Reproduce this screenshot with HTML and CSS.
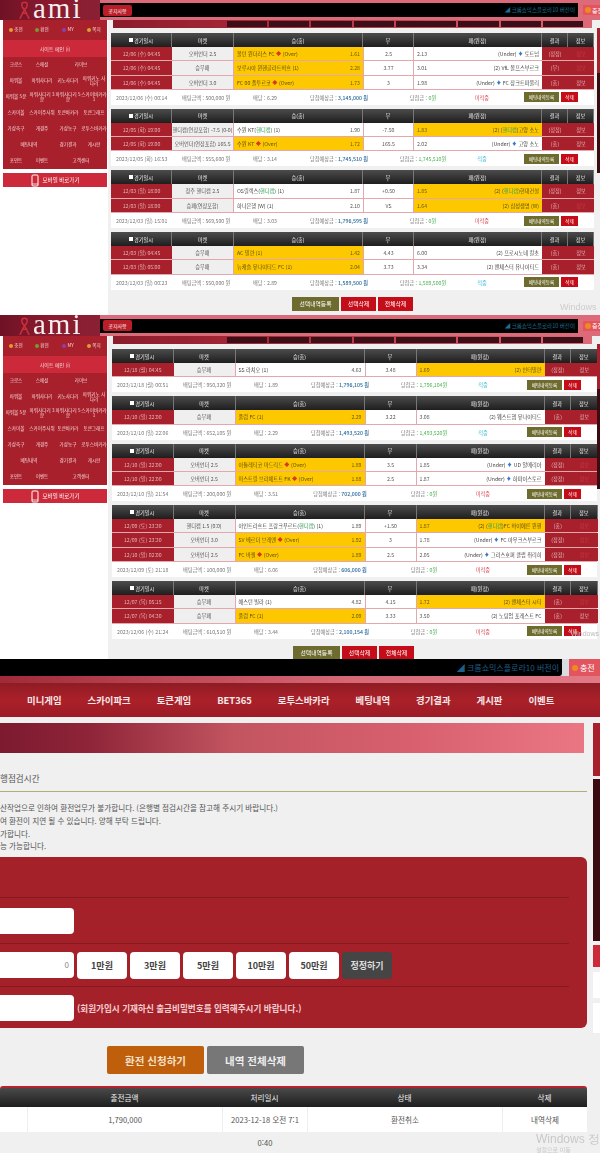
FILE: index.html
```html
<!DOCTYPE html>
<html lang="ko">
<head>
  <meta charset="UTF-8" />
  <meta name="viewport" content="width=device-width, initial-scale=1.0"/>
  <title>ami</title>
  <link rel="stylesheet" href="styles.css">
</head>
<body>

  <!-- First capture -->
  <section class="shot shot-a">
    <header class="top">
      <div class="logo">
        <svg class="ribbon" viewBox="0 0 14 20"><path d="M7 1C3 1 3 6 7 9L2 19M7 1c4 0 4 5 0 8l5 10M4 13h6" fill="none" stroke="#c8303c" stroke-width="1.6"/></svg>
        <span class="logo-text">ami</span>
      </div>
      <div class="ticker">
        <button class="notice">공지사항</button>
        <span class="ticker-text">◢ 크롬쇼믹스플로라10 버전이</span>
      </div>
      <div class="charge"><i class="coin"></i>충전</div>
    </header>
    <div class="body">
      <aside class="side">
        <nav class="menu">
          <a><i class="dot d1"></i>충전</a><a><i class="dot d2"></i>환전</a><a><i class="dot d3"></i>MY</a><a><i class="dot d4"></i>쪽지</a>
          <a class="main-link span4">사이트 메인 (i)</a>
          <a>크로스</a><a>스페셜</a><a class="span2">라이브</a>
          <a>파워볼</a><a>파워사다리</a><a>키노사다리</a><a>파워키노 사다리</a>
          <a>파워볼 5분</a><a>파워사다리 3분</a><a>파워사다리 5분</a><a>스카이바카라 1</a>
          <a>스카이볼</a><a>스카이주사위</a><a>토큰바카라</a><a>토큰그래프</a>
          <a>가상축구</a><a>개경주</a><a>가상농구</a><a>로투스바카라</a>
          <a class="span2">베팅내역</a><a>경기결과</a><a>게시판</a>
          <a>포인트</a><a>이벤트</a><a class="span2">고객센터</a>
        </nav>
        <a class="mobile"><svg class="phone" viewBox="0 0 8 13"><rect x="1" y="1" width="6" height="11" rx="1" fill="none" stroke="#fff" stroke-width="1"/><path d="M1 10h6" stroke="#fff" stroke-width=".8"/></svg>모바일 바로가기</a>
      </aside>
      <main class="main">
        <div class="strip"><i></i><i></i><i></i><i></i><i class="wide"></i><i></i><i></i><i></i></div>

        <div class="ticket">
          <div class="head"><span><i class="check"></i>경기일시</span><span>마켓</span><span>승(홈)</span><span>무</span><span>패(원정)</span><span>결과</span><span>정보</span></div>
          <div class="row"><span class="date">12/06 (수) 04:45</span><span class="mkt">오버언더 2.5</span><span class="pick sel"><b>볼턴 원더러스 FC <i class="up">◆</i> (Over)</b><em>1.61</em></span><span class="mid">2.5</span><span class="pick"><em>2.13</em><b>(Under) <i class="dn">♦</i> 토트넘</b></span><span class="res">(정정)</span><span class="res off">정보</span></div>
          <div class="row"><span class="date">12/06 (수) 04:45</span><span class="mkt">승무패</span><span class="pick sel"><b>보루시아 뮌헨글라트바흐 (1)</b><em>2.28</em></span><span class="mid">3.77</span><span class="pick"><em>3.01</em><b>(2) VfL 볼프스부르크</b></span><span class="res">(무)</span><span class="res off">정보</span></div>
          <div class="row"><span class="date">12/06 (수) 04:45</span><span class="mkt">오버언더 3.0</span><span class="pick sel"><b>FC 00 폴투르코 <i class="up">◆</i> (Over)</b><em>1.73</em></span><span class="mid">3</span><span class="pick"><em>1.98</em><b>(Under) <i class="dn">♦</i> FC 장크트파울리</b></span><span class="res">(홈)</span><span class="res">정보</span></div>
          <div class="foot"><span>2023/12/06 (수) 00:14</span><span>배팅금액 : 500,000 원</span><span>배당 : 6.29</span><span class="exp">당첨예상금 : <b>3,145,000 원</b></span><span class="win">당첨금 : <b>0원</b></span><span class="miss">미적중</span><span class="acts"><button class="olive">베팅내역등록</button><button class="red">삭제</button></span></div>
        </div>

        <div class="ticket">
          <div class="head"><span><i class="check"></i>경기일시</span><span>마켓</span><span>승(홈)</span><span>무</span><span>패(원정)</span><span>결과</span><span>정보</span></div>
          <div class="row"><span class="date">12/05 (화) 19:00</span><span class="mkt">핸디캡(연장포함) -7.5 (0-0)</span><span class="pick"><b>수원 KT(<u>핸디캡</u>) (1)</b><em>1.90</em></span><span class="mid">-7.50</span><span class="pick sel"><em>1.83</em><b>(2) (<u>핸디캡</u>)고양 소노</b></span><span class="res">(정정)</span><span class="res">정보</span></div>
          <div class="row"><span class="date">12/05 (화) 19:00</span><span class="mkt">오버언더(연장포함) 165.5</span><span class="pick sel"><b>수원 KT <i class="up">◆</i> (Over)</b><em>1.72</em></span><span class="mid">165.5</span><span class="pick"><em>2.02</em><b>(Under) <i class="dn">♦</i> 고양 소노</b></span><span class="res">(홈)</span><span class="res">정보</span></div>
          <div class="foot"><span>2023/12/05 (화) 16:53</span><span>배팅금액 : 555,600 원</span><span>배당 : 3.14</span><span class="exp">당첨예상금 : <b>1,745,510 원</b></span><span class="win">당첨금 : <b>1,745,510원</b></span><span class="hit">적중</span><span class="acts"><button class="olive">베팅내역등록</button><button class="red">삭제</button></span></div>
        </div>

        <div class="ticket">
          <div class="head"><span><i class="check"></i>경기일시</span><span>마켓</span><span>승(홈)</span><span>무</span><span>패(원정)</span><span>결과</span><span>정보</span></div>
          <div class="row"><span class="date">12/03 (일) 18:00</span><span class="mkt">청주 핸디캡 2.5</span><span class="pick"><b>OS릴렉스(<u>핸디캡</u>) (1)</b><em>1.87</em></span><span class="mid">+0.50</span><span class="pick sel"><em>1.85</em><b>(2) (<u>핸디캡</u>)현대건설</b></span><span class="res">(정정)</span><span class="res">정보</span></div>
          <div class="row"><span class="date">12/03 (일) 18:00</span><span class="mkt">승패(연장포함)</span><span class="pick"><b>하나은행 (W) (1)</b><em>2.10</em></span><span class="mid">VS</span><span class="pick sel"><em>1.64</em><b>(2) 삼성생명 (W)</b></span><span class="res">(홈)</span><span class="res off">정보</span></div>
          <div class="foot"><span>2023/12/03 (일) 15:01</span><span>배팅금액 : 569,500 원</span><span>배당 : 3.03</span><span class="exp">당첨예상금 : <b>1,796,595 원</b></span><span class="win">당첨금 : <b>0원</b></span><span class="miss">미적중</span><span class="acts"><button class="olive">베팅내역등록</button><button class="red">삭제</button></span></div>
        </div>

        <div class="ticket">
          <div class="head"><span><i class="check"></i>경기일시</span><span>마켓</span><span>승(홈)</span><span>무</span><span>패(원정)</span><span>결과</span><span>정보</span></div>
          <div class="row"><span class="date">12/03 (일) 04:45</span><span class="mkt">승무패</span><span class="pick sel"><b>AC 밀란 (1)</b><em>1.42</em></span><span class="mid">4.43</span><span class="pick"><em>6.00</em><b>(2) 프로시노네 칼초</b></span><span class="res">(홈)</span><span class="res">정보</span></div>
          <div class="row"><span class="date">12/03 (일) 05:00</span><span class="mkt">승무패</span><span class="pick sel"><b>뉴캐슬 유나이티드 FC (1)</b><em>2.04</em></span><span class="mid">3.73</span><span class="pick"><em>3.34</em><b>(2) 맨체스터 유나이티드</b></span><span class="res">(홈)</span><span class="res">정보</span></div>
          <div class="foot"><span>2023/12/03 (일) 00:23</span><span>배팅금액 : 550,000 원</span><span>배당 : 2.89</span><span class="exp">당첨예상금 : <b>1,589,500 원</b></span><span class="win">당첨금 : <b>1,589,500원</b></span><span class="hit">적중</span><span class="acts"><button class="olive">베팅내역등록</button><button class="red">삭제</button></span></div>
        </div>

        <div class="bulk"><button class="olive">선택내역등록</button><button class="red">선택삭제</button><button class="red">전체삭제</button></div>
      </main>
      <div class="rail"><i class="rail-red"></i><i class="rail-dark"></i></div>
    </div>
    <div class="watermark">Windows 정</div>
  </section>

  <!-- Second capture -->
  <section class="shot shot-b">
    <header class="top">
      <div class="logo">
        <svg class="ribbon" viewBox="0 0 14 20"><path d="M7 1C3 1 3 6 7 9L2 19M7 1c4 0 4 5 0 8l5 10M4 13h6" fill="none" stroke="#c8303c" stroke-width="1.6"/></svg>
        <span class="logo-text">ami</span>
      </div>
      <div class="ticker">
        <button class="notice">공지사항</button>
        <span class="ticker-text">◢ 크롬쇼믹스플로라10 버전이</span>
      </div>
      <div class="charge"><i class="coin"></i>충전</div>
    </header>
    <div class="body">
      <aside class="side">
        <nav class="menu">
          <a><i class="dot d1"></i>충전</a><a><i class="dot d2"></i>환전</a><a><i class="dot d3"></i>MY</a><a><i class="dot d4"></i>쪽지</a>
          <a class="main-link span4">사이트 메인 (i)</a>
          <a>크로스</a><a>스페셜</a><a class="span2">라이브</a>
          <a>파워볼</a><a>파워사다리</a><a>키노사다리</a><a>파워키노 사다리</a>
          <a>파워볼 5분</a><a>파워사다리 3분</a><a>파워사다리 5분</a><a>스카이바카라 1</a>
          <a>스카이볼</a><a>스카이주사위</a><a>토큰바카라</a><a>토큰그래프</a>
          <a>가상축구</a><a>개경주</a><a>가상농구</a><a>로투스바카라</a>
          <a class="span2">베팅내역</a><a>경기결과</a><a>게시판</a>
          <a>포인트</a><a>이벤트</a><a class="span2">고객센터</a>
        </nav>
        <a class="mobile"><svg class="phone" viewBox="0 0 8 13"><rect x="1" y="1" width="6" height="11" rx="1" fill="none" stroke="#fff" stroke-width="1"/><path d="M1 10h6" stroke="#fff" stroke-width=".8"/></svg>모바일 바로가기</a>
      </aside>
      <main class="main">
        <div class="strip"><i></i><i></i><i></i><i></i><i class="wide"></i><i></i><i></i><i></i></div>

        <div class="ticket">
          <div class="head"><span><i class="check"></i>경기일시</span><span>마켓</span><span>승(홈)</span><span>무</span><span>패(원정)</span><span>결과</span><span>정보</span></div>
          <div class="row"><span class="date">12/18 (월) 04:45</span><span class="mkt">승무패</span><span class="pick"><b>SS 라치오 (1)</b><em>4.63</em></span><span class="mid">3.48</span><span class="pick sel"><em>1.69</em><b>(2) 인터밀란</b></span><span class="res">(정정)</span><span class="res">정보</span></div>
          <div class="foot"><span>2023/12/18 (월) 00:51</span><span>배팅금액 : 950,320 원</span><span>배당 : 1.89</span><span class="exp">당첨예상금 : <b>1,796,105 원</b></span><span class="win">당첨금 : <b>1,796,104원</b></span><span class="hit">적중</span><span class="acts"><button class="olive">베팅내역등록</button><button class="red">삭제</button></span></div>
        </div>

        <div class="ticket">
          <div class="head"><span><i class="check"></i>경기일시</span><span>마켓</span><span>승(홈)</span><span>무</span><span>패(원정)</span><span>결과</span><span>정보</span></div>
          <div class="row"><span class="date">12/10 (일) 22:00</span><span class="mkt">승무패</span><span class="pick sel"><b>풀럼 FC (1)</b><em>2.29</em></span><span class="mid">3.22</span><span class="pick"><em>3.08</em><b>(2) 웨스트햄 유나이티드</b></span><span class="res">(홈)</span><span class="res">정보</span></div>
          <div class="foot"><span>2023/12/10 (일) 22:06</span><span>배팅금액 : 652,105 원</span><span>배당 : 2.29</span><span class="exp">당첨예상금 : <b>1,493,520 원</b></span><span class="win">당첨금 : <b>1,493,520원</b></span><span class="hit">적중</span><span class="acts"><button class="olive">베팅내역등록</button><button class="red">삭제</button></span></div>
        </div>

        <div class="ticket">
          <div class="head"><span><i class="check"></i>경기일시</span><span>마켓</span><span>승(홈)</span><span>무</span><span>패(원정)</span><span>결과</span><span>정보</span></div>
          <div class="row"><span class="date">12/10 (일) 22:00</span><span class="mkt">오버언더 2.5</span><span class="pick sel"><b>아틀레티코 마드리드 <i class="up">◆</i> (Over)</b><em>1.89</em></span><span class="mid">3.5</span><span class="pick"><em>1.85</em><b>(Under) <i class="dn">♦</i> UD 알메리아</b></span><span class="res">(정정)</span><span class="res off">정보</span></div>
          <div class="row"><span class="date">12/10 (일) 22:00</span><span class="mkt">오버언더 2.5</span><span class="pick sel"><b>마스트릴 브라체트트 FK <i class="up">◆</i> (Over)</b><em>1.88</em></span><span class="mid">2.5</span><span class="pick"><em>1.87</em><b>(Under) <i class="dn">♦</i> 하파이스토르</b></span><span class="res">(정정)</span><span class="res off">정보</span></div>
          <div class="foot"><span>2023/12/10 (일) 21:54</span><span>배팅금액 : 200,000 원</span><span>배당 : 3.51</span><span class="exp">당첨예상금 : <b>702,000 원</b></span><span class="win">당첨금 : <b>0원</b></span><span class="miss">미적중</span><span class="acts"><button class="olive">베팅내역등록</button><button class="red">삭제</button></span></div>
        </div>

        <div class="ticket">
          <div class="head"><span><i class="check"></i>경기일시</span><span>마켓</span><span>승(홈)</span><span>무</span><span>패(원정)</span><span>결과</span><span>정보</span></div>
          <div class="row"><span class="date">12/09 (토) 23:30</span><span class="mkt">핸디캡 1.5 (0:0)</span><span class="pick"><b>아인트라흐트 프랑크푸르트(<u>핸디캡</u>) (1)</b><em>1.89</em></span><span class="mid">+1.50</span><span class="pick sel"><em>1.87</em><b>(2) (<u>핸디캡</u>)FC 바이에른 뮌헨</b></span><span class="res">(홈)</span><span class="res off">정보</span></div>
          <div class="row"><span class="date">12/09 (토) 23:30</span><span class="mkt">오버언더 3.0</span><span class="pick sel"><b>SV 베르더 브레멘 <i class="up">◆</i> (Over)</b><em>1.92</em></span><span class="mid">3</span><span class="pick"><em>1.78</em><b>(Under) <i class="dn">♦</i> FC 아우크스부르크</b></span><span class="res">(정정)</span><span class="res off">정보</span></div>
          <div class="row"><span class="date">12/10 (일) 02:00</span><span class="mkt">오버언더 2.5</span><span class="pick sel"><b>FC 바젤 <i class="up">◆</i> (Over)</b><em>1.89</em></span><span class="mid">2.5</span><span class="pick"><em>2.05</em><b>(Under) <i class="dn">♦</i> 그라스호퍼 클럽 취리히</b></span><span class="res">(정정)</span><span class="res off">정보</span></div>
          <div class="foot"><span>2023/12/09 (토) 21:18</span><span>배팅금액 : 100,000 원</span><span>배당 : 6.06</span><span class="exp">당첨예상금 : <b>606,000 원</b></span><span class="win">당첨금 : <b>0원</b></span><span class="miss">미적중</span><span class="acts"><button class="olive">베팅내역등록</button><button class="red">삭제</button></span></div>
        </div>

        <div class="ticket">
          <div class="head"><span><i class="check"></i>경기일시</span><span>마켓</span><span>승(홈)</span><span>무</span><span>패(원정)</span><span>결과</span><span>정보</span></div>
          <div class="row"><span class="date">12/07 (목) 05:15</span><span class="mkt">승무패</span><span class="pick"><b>애스턴 빌라 (1)</b><em>4.82</em></span><span class="mid">4.15</span><span class="pick sel"><em>1.72</em><b>(2) 맨체스터 시티</b></span><span class="res">(홈)</span><span class="res off">정보</span></div>
          <div class="row"><span class="date">12/07 (목) 04:30</span><span class="mkt">승무패</span><span class="pick sel"><b>풀럼 FC (1)</b><em>2.09</em></span><span class="mid">3.33</span><span class="pick"><em>3.50</em><b>(2) 노팅엄 포레스트 FC</b></span><span class="res">(홈)</span><span class="res">정보</span></div>
          <div class="foot"><span>2023/12/06 (수) 21:24</span><span>배팅금액 : 610,510 원</span><span>배당 : 3.44</span><span class="exp">당첨예상금 : <b>2,100,154 원</b></span><span class="win">당첨금 : <b>0원</b></span><span class="miss">미적중</span><span class="acts"><button class="olive">베팅내역등록</button><button class="red">삭제</button></span></div>
        </div>

        <div class="bulk"><button class="olive">선택내역등록</button><button class="red">선택삭제</button><button class="red">전체삭제</button></div>
      </main>
      <div class="rail"><i class="rail-red"></i><i class="rail-dark"></i></div>
    </div>
    <div class="watermark small">Windows 정</div>
  </section>

  <!-- Third capture: withdrawal form -->
  <section class="shot shot-c">
    <header class="wd-top">
      <div class="wd-black"><span class="wd-ticker">◢ 크롬쇼믹스플로라10 버전이</span></div>
      <div class="wd-charge"><i class="coin"></i>충전</div>
    </header>
    <div class="wd-band"></div>
    <nav class="wd-nav">
      <a>미니게임</a><a>스카이파크</a><a>토큰게임</a><a>BET365</a><a>로투스바카라</a><a>베팅내역</a><a>경기결과</a><a>게시판</a><a>이벤트</a>
    </nav>
    <div class="wd-body">
      <div class="wd-main">
        <div class="wd-banner"></div>
        <h3 class="wd-title">행점검시간</h3>
        <ul class="wd-notes">
          <li>산작업으로 인하여 환전업무가 불가합니다. (은행별 점검시간을 참고해 주시기 바랍니다.)</li>
          <li>여 환전이 지연 될 수 있습니다. 양해 부탁 드립니다.</li>
          <li>가합니다.</li>
          <li>능 가능합니다.</li>
        </ul>
        <form class="wd-form">
          <div class="wd-line wd-line-first"></div>
          <div class="wd-line"><div class="field"></div></div>
          <div class="wd-line">
            <div class="field amount">0</div>
            <button type="button" class="quick">1만원</button>
            <button type="button" class="quick">3만원</button>
            <button type="button" class="quick">5만원</button>
            <button type="button" class="quick">10만원</button>
            <button type="button" class="quick">50만원</button>
            <button type="button" class="quick reset">정정하기</button>
          </div>
          <div class="wd-line last"><div class="field"></div><span class="hint">(회원가입시 기재하신 출금비밀번호를 입력해주시기 바랍니다.)</span></div>
        </form>
        <div class="wd-actions">
          <button class="apply">환전 신청하기</button>
          <button class="clear">내역 전체삭제</button>
        </div>
        <div class="wd-table">
          <div class="wd-thead"><span></span><span>출전금액</span><span>처리일시</span><span>상태</span><span>삭제</span></div>
          <div class="wd-tr"><span></span><span>1,790,000</span><span>2023-12-18 오전 7:1</span><span>환전취소</span><span>내역삭제</span></div>
        </div>
        <div class="wd-time">0:40</div>
      </div>
      <div class="wd-rail">
        <i class="wr-red"></i><i class="wr-dark"></i><i class="wr-red2"></i><i class="wr-white"></i><i class="wr-white tall"></i>
      </div>
    </div>
    <div class="watermark big">Windows 정<small>설정으로 이동</small></div>
  </section>

</body>
</html>
```

FILE: styles.css
```css
:root {
  --red: #a8202c;
  --red-light: #cc2a3a;
  --pink: #dd6a78;
  --yellow: #fdc800;
  --olive: #6d6b2e;
  --btn-red: #c40d18;
  --bg: #f0f0f0;
  --line: #e2a8ae;
}

* {
  margin: 0;
  padding: 0;
  box-sizing: border-box;
  font-family: "Noto Sans CJK KR", "Noto Sans", sans-serif;
}

html, body {
  width: 600px;
  height: 1153px;
  overflow: hidden;
}

body {
  background: var(--bg);
  filter: blur(0.5px);
}

a { color: inherit; text-decoration: none; }
button { border: none; cursor: pointer; color: #fff; }
em, i { font-style: normal; }

.shot {
  position: relative;
  overflow: hidden;
  width: 600px;
}

.shot-a { height: 315px; --top-h: 20px; --cols: 61px 62px 129px 51px 128px 26px 26px; --inset: 3px; --wide: 483px; }
.shot-b { height: 344px; --top-h: 21px; --cols: 61.5px 62px 129px 52px 128px 26.5px 26.5px; --inset: 4px; --wide: 485px; }
.shot-c { height: 494px; }

/* top bar */
.top {
  display: flex;
  align-items: center;
  height: var(--top-h);
  background: var(--pink);
}

.logo {
  display: flex;
  align-items: flex-end;
  flex: 0 0 100px;
  height: 100%;
  padding-left: 18px;
  background: linear-gradient(90deg, #6f1226, #8b1a2e 50%, #8a2034);
  overflow: hidden;
}

.ribbon { width: 13px; height: 19px; }

.logo-text {
  margin-left: 2px;
  padding-bottom: 1.5px;
  font-family: "Liberation Serif", serif;
  font-size: 29px;
  line-height: 22px;
  letter-spacing: 2px;
  color: #f5eeee;
}

.ticker {
  display: flex;
  align-items: center;
  justify-content: space-between;
  width: 478px;
  height: 14px;
  padding: 0 3px;
  background: #000;
}

.notice {
  width: 29px;
  height: 11px;
  font-size: 5px;
  border-radius: 2px;
  background: #b81d28;
}

.ticker-text { font-size: 5.5px; color: #1c6f90; }

.charge {
  display: flex;
  align-items: center;
  gap: 1px;
  height: 10px;
  margin-left: 5px;
  padding-left: 2px;
  flex: 1;
  font-size: 6px;
  white-space: nowrap;
  overflow: hidden;
  color: #fff;
  background: #e2545e;
}

.coin {
  width: 6px;
  height: 6px;
  border-radius: 50%;
  background: #f08a20;
  flex: none;
}

/* layout */
.body { display: flex; }

.side {
  flex: 0 0 108px;
  height: 330px;
  padding-left: 3px;
  background: #fff;
}

.menu {
  display: grid;
  grid-template-columns: repeat(4, 26px);
  grid-template-rows: 20px 17px repeat(7, 16px);
  width: 104px;
  background: var(--red);
}

.menu a {
  display: flex;
  align-items: center;
  justify-content: center;
  text-align: center;
  font-size: 4.6px;
  line-height: 5.5px;
  color: #f4d4d6;
}

.menu .span2 { grid-column: span 2; }
.menu .span4 { grid-column: span 4; }
.menu .main-link { background: var(--red-light); font-size: 5px; }

.dot { width: 4px; height: 4px; margin-right: 1px; border-radius: 50%; }
.d1 { background: #e89a30; }
.d2 { background: #7a9a30; }
.d3 { background: #8a40b0; }
.d4 { background: #d8a030; }

.mobile {
  display: flex;
  align-items: center;
  justify-content: center;
  gap: 4px;
  width: 104px;
  height: 14px;
  margin-top: 4px;
  font-size: 5.5px;
  color: #fff;
  background: var(--red-light);
}

.phone { width: 8px; height: 13px; }

.main { flex: 0 0 489px; }

.strip {
  display: flex;
  gap: 2px;
  height: 8px;
  margin: 0 5px 5px 5px;
  padding: 0 9px 0 114px;
  background: linear-gradient(90deg, #8a1c2c, #a82838 30%, var(--pink));
}

.strip i { flex: 1; height: 6px; margin-top: 1px; background: #3a1018; }
.strip .wide { flex: 1.5; }

.rail { flex: 1; display: flex; flex-direction: column; margin-top: 8px; }
.rail-red { height: 45px; background: var(--red); }
.rail-dark { height: 100px; background: #3a0c12; }

/* betting tickets */
.ticket {
  width: var(--wide);
  margin: 0 0 4px var(--inset);
}

.head, .row {
  display: grid;
  grid-template-columns: var(--cols);
}

.head {
  height: 14px;
  background: linear-gradient(#4c4c4c, #1e1e1e);
}

.head span {
  display: flex;
  align-items: center;
  justify-content: center;
  font-size: 5.2px;
  color: #eee;
  border-right: 1px solid #777;
}

.check { width: 4px; height: 4px; margin-right: 1px; background: #fff; }

.row {
  height: 14.3px;
  font-size: 5.2px;
  line-height: 13px;
  color: #555;
  background: #fff;
  border-bottom: 1px solid var(--line);
}

.row > span { white-space: nowrap; overflow: hidden; }

.date, .res {
  text-align: center;
  color: #e0b4b6;
  background: var(--red);
}

.res.off { color: #c83a44; }

.mkt {
  text-align: center;
  background: #efefef;
  border-right: 1px solid var(--line);
}

.mid {
  text-align: center;
  border-left: 1px solid var(--line);
  border-right: 1px solid var(--line);
}

.pick {
  display: flex;
  justify-content: space-between;
  padding: 0 3px;
}

.pick b { font-weight: 400; color: #444; }
.pick.sel { background: var(--yellow); color: #6e5a10; }
.pick.sel b { color: #5e4d10; }
.pick u { text-decoration: none; color: #33a054; }

.up { color: #d8382c; }
.dn { color: #3a78c8; }

.foot {
  display: grid;
  grid-template-columns: 66px 71px 52px 68px 100px 18px 1fr;
  align-items: center;
  height: 15px;
  padding: 0 16px 0 5px;
  font-size: 5.2px;
  color: #777;
  background: #fff;
}

.foot > span { white-space: nowrap; }

.exp, .win, .miss, .hit { text-align: center; }
.exp b { font-weight: 500; color: #2b6a9e; }
.win b { font-weight: 400; color: #4cb050; }
.miss { color: #d8404c; }
.hit { color: #38b8d8; }

.acts { display: flex; justify-content: flex-end; gap: 2px; }

.acts button {
  height: 10px;
  font-size: 4.6px;
}

.acts .olive { width: 35px; }
.acts .red { width: 17px; }

.olive { background: var(--olive); }
.red { background: var(--btn-red); }

.bulk {
  display: flex;
  gap: 2px;
  width: var(--wide);
  margin: 7px 0 0 var(--inset);
  padding-left: 181px;
}

.bulk button { height: 14px; font-size: 5.8px; }
.bulk .olive { width: 47px; }
.bulk .red { width: 35px; }

.watermark {
  position: absolute;
  right: -8px;
  bottom: 1px;
  font-family: "Liberation Sans", sans-serif;
  font-size: 9px;
  color: #ccc;
}

.watermark.small { bottom: 20px; font-size: 7px; color: #bbb; }

.watermark.big {
  right: 0;
  bottom: 0;
  font-size: 12px;
  line-height: 13px;
  color: #c8c8c8;
}

.watermark small {
  display: block;
  font-size: 6px;
  line-height: 7px;
}

/* withdrawal capture */
.wd-top { display: flex; height: 17px; background: #d8dbe0; }

.wd-black {
  display: flex;
  align-items: center;
  justify-content: flex-end;
  width: 562px;
  padding-right: 3px;
  background: #000;
  border-radius: 0 0 3px 0;
}

.wd-ticker { font-size: 8px; color: #1c5f88; }

.wd-charge {
  display: flex;
  align-items: center;
  gap: 2px;
  flex: 1;
  margin-left: 7px;
  height: 17px;
  padding-left: 3px;
  font-size: 8px;
  color: #fff;
  background: #e2545e;
}

.wd-band {
  height: 7px;
  background: linear-gradient(90deg, #a02a3a, #d86a78 60%, #e07a86);
}

.wd-nav {
  display: flex;
  align-items: center;
  gap: 26px;
  height: 34px;
  padding-left: 27px;
  background: linear-gradient(#8f1c24, #ab2029 50%, #9c1c26);
}

.wd-nav a {
  font-size: 9.4px;
  font-weight: 700;
  white-space: nowrap;
  color: #f6e8e8;
}

.wd-body { display: flex; gap: 6px; padding-top: 6px; background: var(--bg); }

.wd-main { flex: 0 0 587px; }

.wd-banner {
  width: 584px;
  height: 30px;
  background: linear-gradient(90deg, #7c1a30, #8e2438 15%, #c25560 40%, #d8606e 70%, #ea7684);
}

.wd-title {
  height: 39px;
  padding-top: 16px;
  font-size: 8.6px;
  line-height: 18px;
  font-weight: 400;
  color: #555;
  border-bottom: 1px solid #b5ad78;
}

.wd-notes {
  height: 65px;
  padding-top: 10px;
  list-style: none;
}

.wd-notes li {
  height: 12.8px;
  font-size: 7.6px;
  line-height: 12.8px;
  white-space: nowrap;
  color: #555;
}

.wd-form {
  height: 171px;
  background: #a5212a;
  border-radius: 0 6px 6px 0;
}

.wd-line {
  display: flex;
  align-items: center;
  gap: 3px;
  height: 46px;
  margin-right: 18px;
  border-bottom: 1px solid #84191f;
}

.wd-line-first { height: 41px; }
.wd-line:nth-child(3) { height: 43px; }
.wd-line.last { height: 41px; border-bottom: none; }

.field {
  flex: 0 0 74px;
  height: 26px;
  padding-right: 5px;
  background: #fff;
  border-radius: 0 4px 4px 0;
  font-size: 8px;
  line-height: 26px;
  text-align: right;
  color: #888;
}

.quick {
  flex: 0 0 50px;
  height: 27px;
  font-size: 9px;
  font-weight: 700;
  color: #444;
  background: #fff;
  border-radius: 4px;
}

.quick.reset { color: #ddd; background: #454545; }

.hint {
  font-size: 8.6px;
  font-weight: 700;
  white-space: nowrap;
  color: #f3cfd0;
}

.wd-actions {
  display: flex;
  gap: 3px;
  padding: 18px 0 12px 107px;
}

.wd-actions button {
  width: 97px;
  height: 28px;
  font-size: 10.5px;
  font-weight: 700;
  border-radius: 2px;
}

.apply { background: #bf5f0c; color: #f6e0c6; }
.clear { background: #777; color: #eee; }

.wd-thead, .wd-tr {
  display: grid;
  grid-template-columns: 27px 195px 85px 195px 85px;
  font-size: 7.6px;
  text-align: center;
}

.wd-thead {
  height: 21px;
  line-height: 19px;
  color: #eee;
  background: linear-gradient(#4a4a4a, #1e1e1e);
  border-top: 2px solid #b8222e;
  border-radius: 3px 3px 0 0;
}

.wd-tr {
  height: 25px;
  line-height: 25px;
  color: #555;
  background: #fff;
}

.wd-tr span + span { border-left: 1px solid #eee; }

.wd-time {
  width: 530px;
  padding-top: 5px;
  font-size: 7.6px;
  text-align: center;
  color: #555;
}

.wd-rail { display: flex; flex-direction: column; flex: 1; }
.wd-rail i { display: block; }
.wr-red { height: 53px; background: var(--red); }
.wr-dark { height: 162px; margin-top: 3px; background: #3a0c12; }
.wr-red2 { height: 22px; margin-top: 4px; background: var(--red-light); }
.wr-white { height: 26px; margin-top: 5px; background: #fff; }
.wr-white.tall { height: 30px; }
```
